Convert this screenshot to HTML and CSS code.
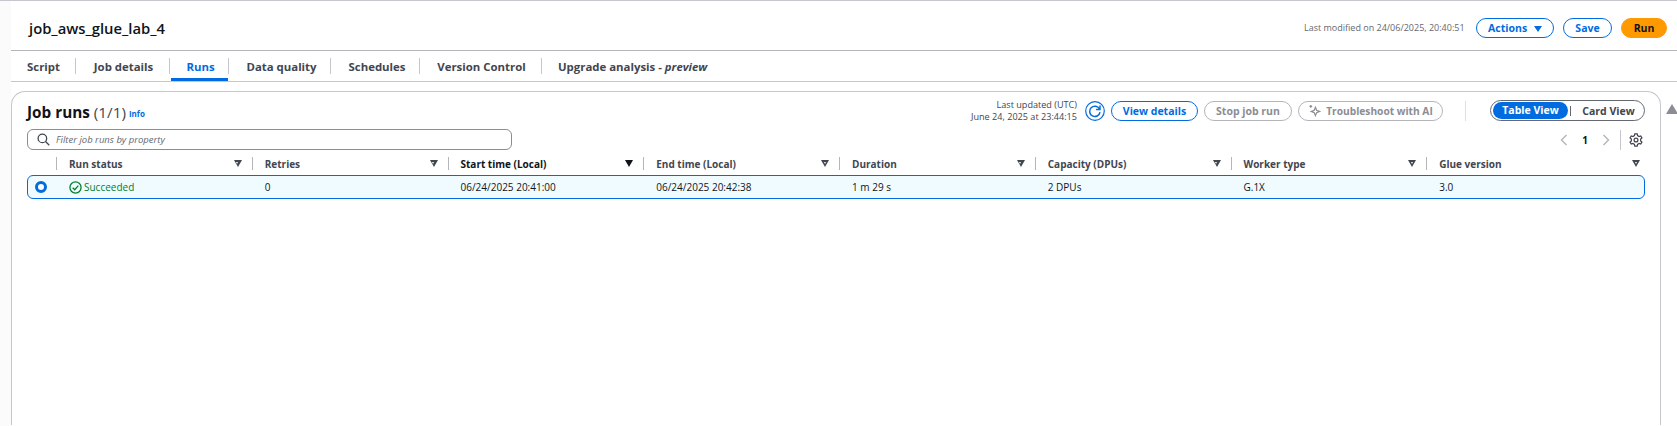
FILE: index.html
```html
<!DOCTYPE html>
<html lang="en">
<head>
    <meta charset="UTF-8">
    <title>job_aws_glue_lab_4</title>
    <link rel="stylesheet" href="styles.css">
</head>
<body>
    <div class="page">
        <header class="job-header">
            <h1>job_aws_glue_lab_4</h1>
            <div class="job-actions">
                <span class="modified">Last modified on 24/06/2025, 20:40:51</span>
                <button class="btn btn-actions">Actions <span class="caret"></span></button>
                <button class="btn btn-save">Save</button>
                <button class="btn btn-run">Run</button>
            </div>
        </header>

        <nav class="tabs">
            <a class="tab tab-script">Script</a>
            <a class="tab tab-details">Job details</a>
            <a class="tab tab-runs active">Runs</a>
            <a class="tab tab-quality">Data quality</a>
            <a class="tab tab-schedules">Schedules</a>
            <a class="tab tab-version">Version Control</a>
            <a class="tab tab-upgrade">Upgrade analysis - <em>preview</em></a>
        </nav>

        <section class="card">
            <div class="card-top">
                <h2>Job runs <span class="count">(1/1)</span><a class="info">Info</a></h2>
                <div class="card-actions">
                    <div class="updated">Last updated (UTC)<br>June 24, 2025 at 23:44:15</div>
                    <button class="refresh" aria-label="Refresh">
                        <svg viewBox="0 0 20 20" width="20" height="20" fill="none" stroke="#006ce0">
                            <circle cx="10" cy="10" r="9.3" stroke-width="1.2"/>
                            <path d="M14.6 8.2A5.2 5.2 0 1 0 15 11.2" stroke-width="1.5"/>
                            <path d="M15 4.6v3.9h-3.9" stroke-width="1.5"/>
                        </svg>
                    </button>
                    <button class="btn btn-view">View details</button>
                    <button class="btn btn-off btn-stop">Stop job run</button>
                    <button class="btn btn-off btn-ai">
                        <svg viewBox="0 0 14 14" width="13" height="13" fill="none" stroke="#8c8c94" stroke-width="1.3">
                            <path d="M8 3.5l1.3 3.2 3.2 1.3-3.2 1.3L8 12.5 6.7 9.3 3.5 8l3.2-1.3z"/>
                            <path d="M3 1v3M1.5 2.5h3"/>
                        </svg>
                        Troubleshoot with AI
                    </button>
                    <span class="sep"></span>
                    <div class="view-toggle">
                        <span class="seg seg-on">Table View</span>
                        <span class="seg-line"></span>
                        <span class="seg seg-card">Card View</span>
                    </div>
                </div>
            </div>

            <div class="filter-row">
                <div class="filter">
                    <svg viewBox="0 0 14 14" width="13" height="13" fill="none" stroke="#424650" stroke-width="1.4">
                        <circle cx="5.8" cy="5.8" r="4.6"/>
                        <path d="M9.2 9.2l4 4"/>
                    </svg>
                    <span>Filter job runs by property</span>
                </div>
                <div class="pager">
                    <svg viewBox="0 0 8 12" width="8" height="12" fill="none" stroke="#b4b4bb" stroke-width="1.4"><path d="M6.5 1l-5 5 5 5"/></svg>
                    <span class="page-no">1</span>
                    <svg viewBox="0 0 8 12" width="8" height="12" fill="none" stroke="#b4b4bb" stroke-width="1.4"><path d="M1.5 1l5 5-5 5"/></svg>
                    <span class="pager-sep"></span>
                    <svg class="gear" viewBox="0 0 16 16" width="14" height="14" fill="none" stroke="#424650" stroke-width="1.4">
                        <circle cx="8" cy="8" r="2.2"/>
                        <path d="M6.6 1h2.8l.4 2 1.7 1 1.9-.7 1.4 2.4-1.5 1.3v2l1.5 1.3-1.4 2.4-1.9-.7-1.7 1-.4 2H6.6l-.4-2-1.7-1-1.9.7-1.4-2.4L2.7 9V7L1.2 5.7l1.4-2.4 1.9.7 1.7-1z"/>
                    </svg>
                </div>
            </div>

            <div class="table">
                <div class="cols head">
                    <div class="th blank"></div>
                    <div class="th">Run status <i class="sort"></i></div>
                    <div class="th">Retries <i class="sort"></i></div>
                    <div class="th strong">Start time (Local) <i class="sort down"></i></div>
                    <div class="th">End time (Local) <i class="sort"></i></div>
                    <div class="th">Duration <i class="sort"></i></div>
                    <div class="th">Capacity (DPUs) <i class="sort"></i></div>
                    <div class="th">Worker type <i class="sort"></i></div>
                    <div class="th th-last">Glue version <i class="sort"></i></div>
                </div>
                <div class="cols row selected">
                    <div class="td radio-cell"><span class="radio"></span></div>
                    <div class="td status">
                        <svg viewBox="0 0 14 14" width="13" height="13" fill="none" stroke="#00802f" stroke-width="1.4">
                            <circle cx="7" cy="7" r="6"/>
                            <path d="M4 7.2l2.2 2.2L10 5"/>
                        </svg>
                        Succeeded
                    </div>
                    <div class="td">0</div>
                    <div class="td">06/24/2025 20:41:00</div>
                    <div class="td">06/24/2025 20:42:38</div>
                    <div class="td">1 m 29 s</div>
                    <div class="td">2 DPUs</div>
                    <div class="td">G.1X</div>
                    <div class="td">3.0</div>
                </div>
            </div>
        </section>
        <div class="scroll-thumb"></div>
    </div>
</body>
</html>
```

FILE: styles.css
```css
* {
    box-sizing: border-box;
}

html, body {
    height: 100%;
    overflow: hidden;
}

body {
    margin: 0;
    font-family: "Open Sans", "Noto Sans", sans-serif;
    font-size: 10px;
    color: #0f141a;
    background: #fbfbfb;
    border-top: 1px solid #c6c6cd;
}

.page {
    position: relative;
    margin-left: 11px;
    height: 425px;
    background: #fff;
    padding-right: 16px;
}

button {
    font-family: inherit;
    cursor: pointer;
}

/* header */
.job-header {
    display: flex;
    align-items: center;
    justify-content: space-between;
    height: 50px;
    margin-right: -16px;
    padding: 4px 10px 0 18px;
    border-bottom: 1px solid #b4b4bb;
}

h1 {
    margin: 0;
    font-size: 14.8px;
    font-weight: 600;
}

.job-actions {
    display: flex;
    align-items: center;
}

.modified {
    width: 172px;
    font-size: 9px;
    color: #656871;
    white-space: nowrap;
}

.btn {
    height: 20px;
    padding: 0;
    border: 1.5px solid #006ce0;
    border-radius: 10px;
    background: #fff;
    color: #006ce0;
    font-size: 10.5px;
    font-weight: 700;
    white-space: nowrap;
}

.btn-actions {
    width: 78px;
}

.caret {
    display: inline-block;
    width: 0;
    height: 0;
    margin-left: 4px;
    border-left: 4px solid transparent;
    border-right: 4px solid transparent;
    border-top: 6px solid #006ce0;
}

.btn-save {
    width: 49px;
    margin-left: 9px;
}

.btn-run {
    width: 46px;
    margin-left: 9px;
    background: #ff9900;
    border-color: #ff9900;
    color: #0f141a;
}

/* tabs */
.tabs {
    display: flex;
    height: 31px;
    margin-right: -16px;
    border-bottom: 1px solid #c6c6cd;
}

.tab {
    position: relative;
    display: flex;
    align-items: center;
    justify-content: center;
    margin-top: 7px;
    height: 16px;
    font-size: 11.4px;
    font-weight: 700;
    color: #424650;
    border-right: 1px solid #c6c6cd;
    white-space: nowrap;
}

.tab em {
    margin-left: 3px;
}

.tab-script { width: 65px; padding-left: 16px; justify-content: flex-start; }
.tab-details { width: 94px; padding-left: 2px; }
.tab-runs { width: 59px; padding-left: 3px; color: #006ce0; }
.tab-quality { width: 102px; padding-left: 4px; }
.tab-schedules { width: 89px; padding-left: 4px; }
.tab-version { width: 122px; padding-left: 2px; }
.tab-upgrade { padding-left: 16px; border-right: 0; }

.tab-runs.active::after {
    content: "";
    position: absolute;
    left: 1px;
    right: 0;
    top: 20px;
    height: 3px;
    background: #006ce0;
}

/* card */
.card {
    margin-top: 9px;
    height: 334px;
    border: 1px solid #c6c6cd;
    border-bottom: 0;
    border-radius: 14px 14px 0 0;
    padding: 8px 15px 0;
}

.card-top {
    display: flex;
    justify-content: space-between;
}

h2 {
    margin: 2px 0 0;
    font-size: 15.3px;
    font-weight: 700;
    line-height: 20px;
}

.count {
    font-weight: 400;
    color: #424650;
}

.info {
    margin-left: 3px;
    font-size: 8px;
    font-weight: 700;
    color: #006ce0;
    vertical-align: 1px;
}

.card-actions {
    display: flex;
    align-items: center;
    height: 21px;
}

.updated {
    font-size: 9.1px;
    line-height: 12px;
    text-align: right;
    color: #424650;
    white-space: nowrap;
}

.refresh {
    width: 20px;
    height: 20px;
    margin: 0 6px 0 8px;
    padding: 0;
    border: 0;
    background: none;
}

.btn-view { width: 87px; }

.btn-off {
    margin-left: 6px;
    border-color: #b4b4bb;
    border-width: 1px;
    color: #8c8c94;
}

.btn-stop { width: 88px; }

.btn-ai {
    display: flex;
    align-items: center;
    justify-content: center;
    gap: 5px;
    width: 145px;
    font-size: 10.2px;
}

.sep {
    width: 1px;
    height: 20px;
    margin: 0 24px 0 22px;
    background: #dedee3;
}

.view-toggle {
    display: flex;
    align-items: center;
    width: 155px;
    height: 21px;
    padding: 0 2px;
    border: 1px solid #656871;
    border-radius: 11px;
    font-size: 10.5px;
    font-weight: 700;
    color: #424650;
}

.seg {
    flex: 1;
    text-align: center;
    white-space: nowrap;
}

.seg-on {
    flex: 0 0 75px;
    height: 17px;
    line-height: 17px;
    border-radius: 9px;
    background: #006ce0;
    color: #fff;
}

.seg-card {
    padding-left: 4px;
}

.seg-line {
    width: 1px;
    height: 10px;
    margin-left: 2px;
    background: #656871;
}

.filter-row {
    display: flex;
    align-items: center;
    justify-content: space-between;
    margin-top: 5px;
}

.filter {
    display: flex;
    align-items: center;
    gap: 6px;
    width: 485px;
    height: 21px;
    padding-left: 9px;
    border: 1px solid #8c8c94;
    border-radius: 6px;
    font-size: 9.5px;
    font-style: italic;
    color: #656871;
}

.pager {
    display: flex;
    align-items: center;
}

.page-no {
    width: 34px;
    text-align: center;
    font-size: 10px;
    font-weight: 700;
}

.pager-sep {
    width: 1px;
    height: 20px;
    margin: 0 8px 0 10px;
    background: #c6c6cd;
}

.gear {
    margin-right: 2px;
}

/* table */
.table {
    width: 1618px;
}

.cols {
    display: grid;
    grid-template-columns: 29px repeat(7, 195.75px) 1fr;
}

.head {
    height: 25px;
    padding-top: 2px;
    align-items: center;
}

.th {
    display: flex;
    align-items: center;
    justify-content: space-between;
    height: 13px;
    padding: 0 5px 0 12px;
    border-left: 1px solid #b4b4bb;
    font-size: 10px;
    font-weight: 700;
    color: #424650;
}

.th.blank {
    border-left: 0;
}

.th.strong {
    color: #0f141a;
}

.th-last .sort {
    margin-right: 0;
}

/* hollow triangle: dark one with a white one on top */
.sort {
    position: relative;
    width: 0;
    height: 0;
    margin-right: 5px;
    border-left: 4px solid transparent;
    border-right: 4px solid transparent;
    border-top: 7px solid #424650;
}

.sort::after {
    content: "";
    position: absolute;
    left: -1.5px;
    top: -5.5px;
    border-left: 1.5px solid transparent;
    border-right: 1.5px solid transparent;
    border-top: 2px solid #fff;
}

.sort.down {
    border-top-color: #0f141a;
}

.sort.down::after {
    display: none;
}

.row {
    height: 24px;
    align-items: center;
    border: 1px solid #006ce0;
    border-radius: 6px;
    background: #f0fbff;
}

.td {
    padding-left: 12px;
    font-size: 10px;
    color: #0f141a;
}

.radio-cell {
    padding-left: 7px;
    display: flex;
    align-items: center;
}

.radio {
    width: 12px;
    height: 12px;
    border-radius: 50%;
    border: 3.5px solid #006ce0;
    background: #fff;
}

.status {
    display: flex;
    align-items: center;
    gap: 2px;
    color: #00802f;
}

.scroll-thumb {
    position: absolute;
    left: 1655px;
    top: 103px;
    width: 12px;
    height: 10px;
    background: #8c8c94;
    clip-path: polygon(50% 0, 100% 100%, 0 100%);
}
```
